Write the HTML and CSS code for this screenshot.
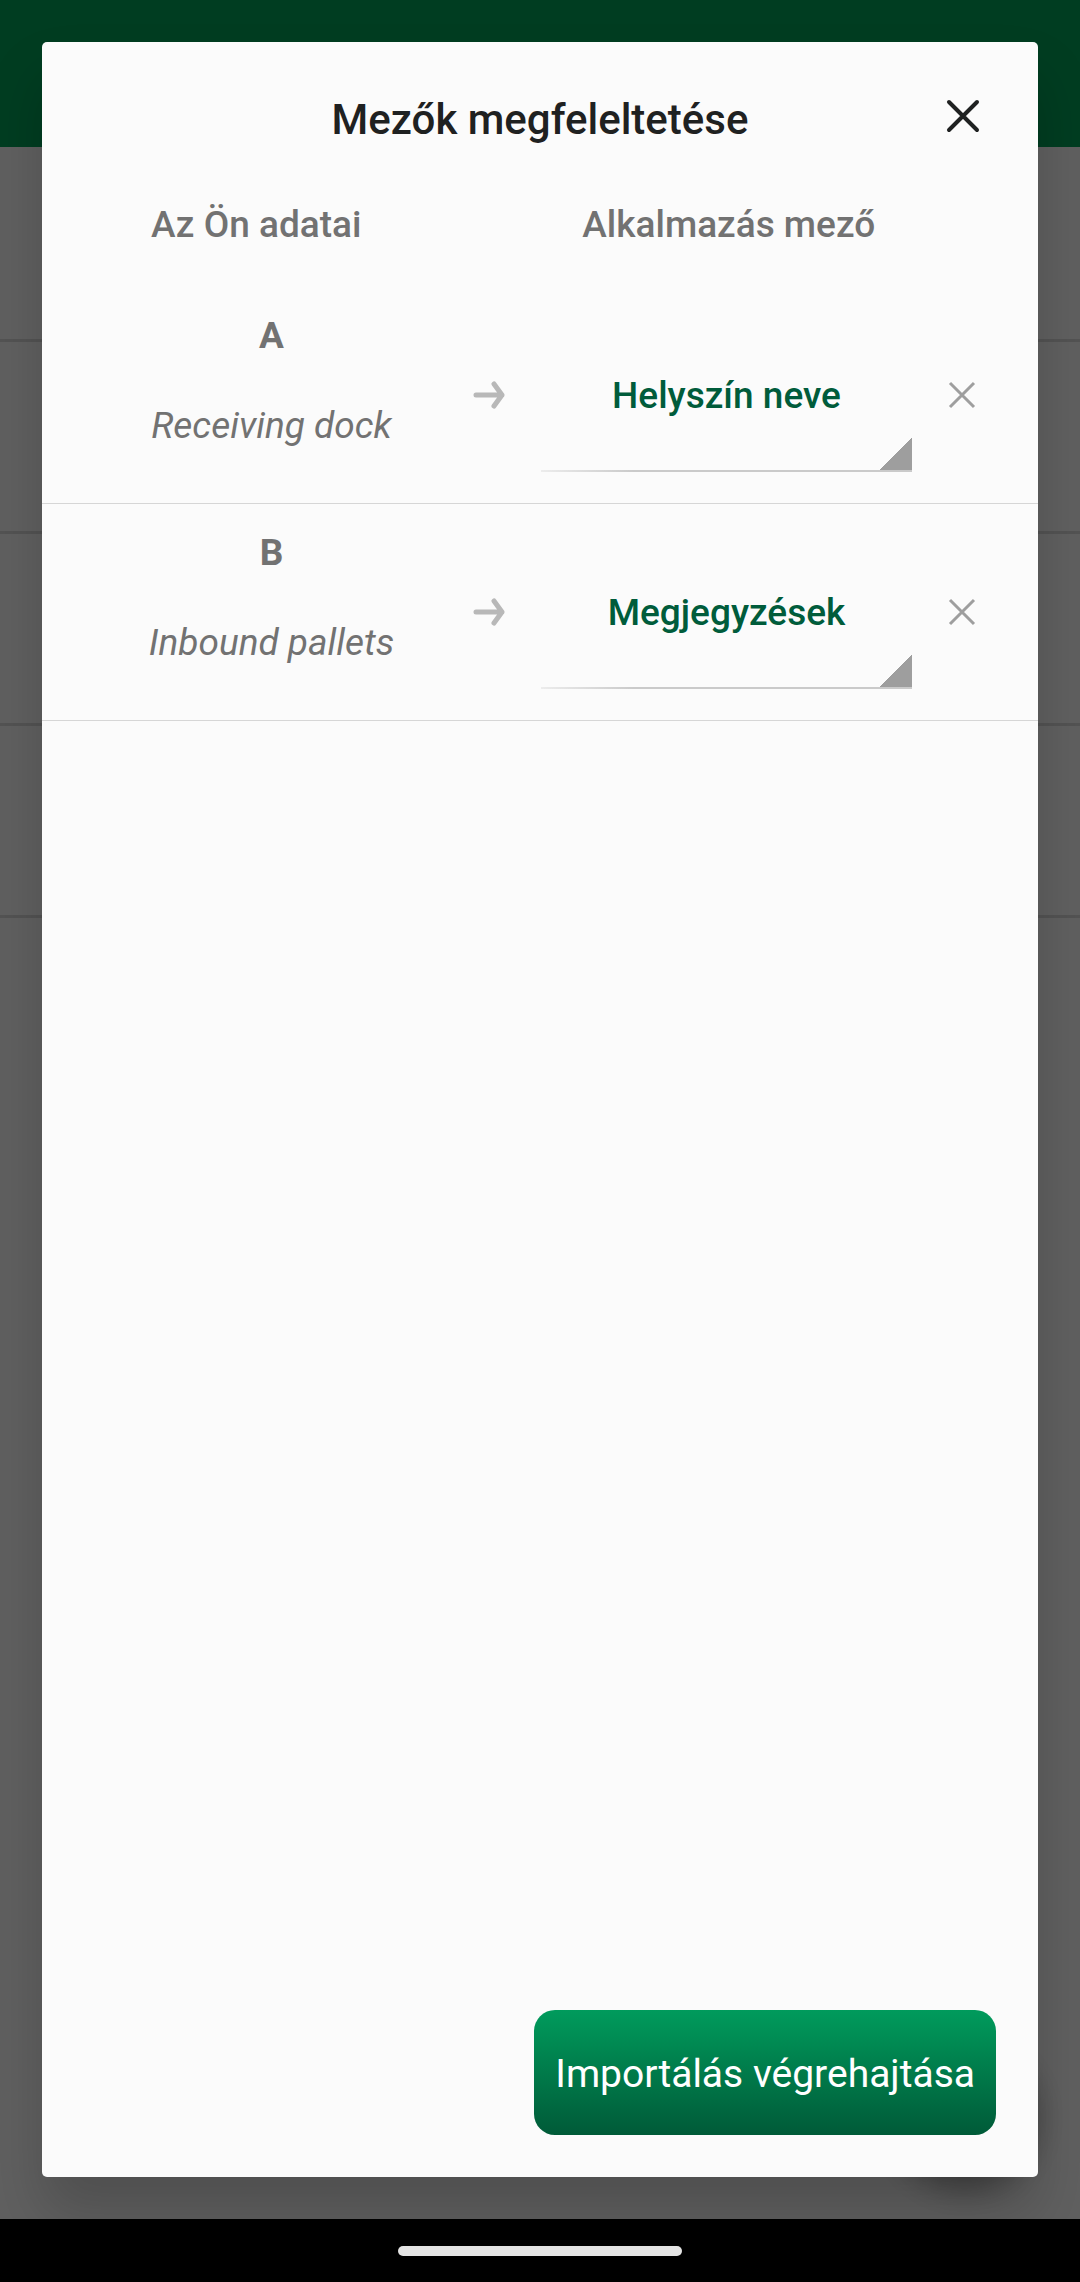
FILE: index.html
```html
<!DOCTYPE html>
<html lang="hu">
<head>
    <meta charset="UTF-8">
    <meta name="viewport" content="width=device-width, initial-scale=1.0">
    <title>Mezők megfeleltetése</title>
    <link rel="stylesheet" href="styles.css">
</head>
<body>
    <div class="screen">
        <div class="page" aria-hidden="true">
            <div class="app-bar"></div>
            <div class="page-list">
                <div class="page-row"></div>
                <div class="page-row"></div>
                <div class="page-row"></div>
                <div class="page-row"></div>
            </div>
            <div class="fab"></div>
        </div>
        <div class="scrim"></div>

        <main class="dialog" role="dialog" aria-labelledby="dialog-title">
            <header class="dialog-header">
                <h1 class="dialog-title" id="dialog-title">Mezők megfeleltetése</h1>
                <button class="icon-btn close-btn" type="button" aria-label="Bezárás">
                    <svg class="close-icon" viewBox="0 0 34 34">
                        <path d="M3 3l28 28M31 3L3 31"/>
                    </svg>
                </button>
            </header>

            <div class="columns">
                <h2 class="column-title">Az Ön adatai</h2>
                <h2 class="column-title">Alkalmazás mező</h2>
            </div>

            <ul class="mappings">
                <li class="mapping">
                    <div class="source">
                        <label class="source-name" for="field-a">A</label>
                        <p class="source-sample">Receiving dock</p>
                    </div>
                    <svg class="arrow" viewBox="0 0 32 28">
                        <path d="M3 14h26M21 3l8 11-8 11"/>
                    </svg>
                    <select class="field" id="field-a">
                        <option selected>Helyszín neve</option>
                        <option>Megjegyzések</option>
                    </select>
                    <button class="icon-btn" type="button" aria-label="A törlése">
                        <svg class="remove-icon" viewBox="0 0 28 28">
                            <path d="M2 2l24 24M26 2L2 26"/>
                        </svg>
                    </button>
                </li>
                <li class="mapping">
                    <div class="source">
                        <label class="source-name" for="field-b">B</label>
                        <p class="source-sample">Inbound pallets</p>
                    </div>
                    <svg class="arrow" viewBox="0 0 32 28">
                        <path d="M3 14h26M21 3l8 11-8 11"/>
                    </svg>
                    <select class="field" id="field-b">
                        <option>Helyszín neve</option>
                        <option selected>Megjegyzések</option>
                    </select>
                    <button class="icon-btn" type="button" aria-label="B törlése">
                        <svg class="remove-icon" viewBox="0 0 28 28">
                            <path d="M2 2l24 24M26 2L2 26"/>
                        </svg>
                    </button>
                </li>
            </ul>

            <footer class="dialog-footer">
                <button class="import-btn" type="button">Importálás végrehajtása</button>
            </footer>
        </main>
    </div>
    <div class="nav-bar">
        <div class="nav-handle"></div>
    </div>
</body>
</html>
```
FILE: styles.css
```css
:root {
    --surface: #fbfbfb;
    --text-primary: #1f2121;
    --text-secondary: #727272;
    --accent: #005c3b;
    --icon: #9e9e9e;
    --divider: #d6d6d6;
}
* {
    box-sizing: border-box;
    margin: 0;
    padding: 0;
}
body {
    display: flex;
    flex-direction: column;
    min-height: 100vh;
    background-color: #000;
    font-family: Roboto, "Noto Sans", sans-serif;
    color: var(--text-secondary);
}
button, select {
    font-family: inherit;
    border: none;
    background: none;
    cursor: pointer;
}
.screen {
    position: relative;
    display: flex;
    flex: 1;
    padding: 42px;
    overflow: hidden;
}

/* page under the dialog */
.page, .scrim {
    position: absolute;
    inset: 0;
}
.page {
    background-color: #f0f0f0;
}
.scrim {
    background-color: rgba(0,0,0,0.6);
}
.app-bar {
    height: 147px;
    background-color: #009953;
}
.page-list {
    padding-top: 3px;
}
.page-row {
    height: 192px;
    border-bottom: 3px solid #d0d0d0;
}
.fab {
    position: absolute;
    right: 42px;
    bottom: 42px;
    width: 147px;
    height: 147px;
    border-radius: 50%;
    background-color: #009953;
    box-shadow: 0 14px 28px rgba(0,0,0,0.3);
}

/* dialog */
.dialog {
    position: relative;
    display: flex;
    flex: 1;
    flex-direction: column;
    background-color: var(--surface);
    border-radius: 5px;
    box-shadow: 0 36px 56px rgba(0,0,0,0.18);
}
.dialog-header {
    display: grid;
    grid-template-columns: 1fr 100px;
    padding: 44px 25px 0 125px;
}
.dialog-title {
    padding-top: 9px;
    font-size: 42px;
    font-weight: 500;
    line-height: 49px;
    text-align: center;
    color: var(--text-primary);
}
.icon-btn {
    display: flex;
    align-items: center;
    justify-content: center;
    height: 60px;
}
.icon-btn svg, .arrow {
    fill: none;
    stroke: var(--icon);
}
.close-btn .close-icon {
    width: 34px;
    height: 34px;
    stroke: var(--text-primary);
    stroke-width: 4;
    stroke-linecap: round;
}
.remove-icon {
    width: 28px;
    height: 28px;
    stroke-width: 3;
}
.columns {
    display: grid;
    grid-template-columns: 1fr 1fr;
    gap: 128px;
    padding: 57px 137px 40px 42px;
}
.column-title {
    font-size: 37px;
    font-weight: 500;
    line-height: 44px;
    text-align: center;
    white-space: nowrap;
}
.mappings {
    flex: 1;
    list-style: none;
}
.mapping {
    display: grid;
    grid-template-columns: 1fr 84px 1fr 100px;
    align-items: center;
    padding: 0 26px 0 44px;
    border-bottom: 1px solid var(--divider);
}
.source {
    display: flex;
    flex-direction: column;
    gap: 46px;
    padding: 27px 0 55px;
    font-size: 37px;
    line-height: 44px;
    text-align: center;
}
.source-name {
    font-weight: 700;
}
.source-sample {
    font-style: italic;
}
.arrow {
    width: 32px;
    height: 28px;
    margin-left: 16px;
    stroke: #b8b8b8;
    stroke-width: 5;
    stroke-linecap: round;
    stroke-linejoin: round;
}
.field {
    appearance: none;
    width: 100%;
    height: 154px;
    font-size: 37px;
    font-weight: 500;
    text-align: center;
    text-align-last: center;
    color: var(--accent);
    background-image:
        linear-gradient(135deg, transparent 50%, var(--icon) 50%),
        linear-gradient(90deg, #ececec, #cacaca 25%);
    background-repeat: no-repeat;
    background-position: right bottom 2px, left bottom;
    background-size: 32px 32px, 100% 2px;
}
.dialog-footer {
    display: flex;
    justify-content: flex-end;
    padding: 42px;
}
.import-btn {
    height: 125px;
    padding: 3px 21px 0;
    font-size: 39px;
    color: #fff;
    background-image: linear-gradient(#009b5c, #005a38);
    border-radius: 21px;
}

/* system navigation */
.nav-bar {
    display: flex;
    align-items: center;
    justify-content: center;
    height: 63px;
}
.nav-handle {
    width: 284px;
    height: 10px;
    border-radius: 5px;
    background-color: #e4e4e4;
}
```
